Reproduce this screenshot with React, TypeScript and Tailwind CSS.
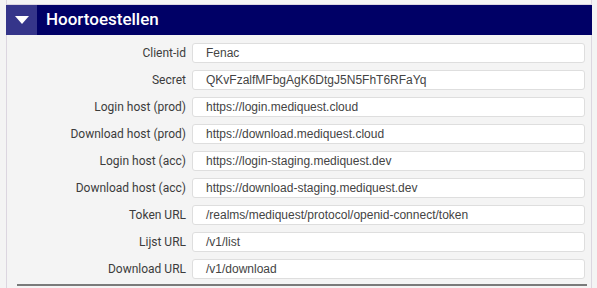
const rows: [string, string][] = [
  ["Client-id", "Fenac"],
  ["Secret", "QKvFzalfMFbgAgK6DtgJ5N5FhT6RFaYq"],
  ["Login host (prod)", "https://login.mediquest.cloud"],
  ["Download host (prod)", "https://download.mediquest.cloud"],
  ["Login host (acc)", "https://login-staging.mediquest.dev"],
  ["Download host (acc)", "https://download-staging.mediquest.dev"],
  ["Token URL", "/realms/mediquest/protocol/openid-connect/token"],
  ["Lijst URL", "/v1/list"],
  ["Download URL", "/v1/download"],
];

export default function App() {
  return (
    <div className="w-[597px] h-[288px] overflow-hidden bg-[#f4f4f4] font-['Roboto',sans-serif]">
      <div className="ml-[6px] w-[586px] h-[5px] border-x border-b border-[#dcd6e0]" />
      <div className="ml-[6px] w-[586px] h-[283px] border-x border-[#dcd6e0]">
        <div className="flex h-[30px] -mx-px">
          <div className="w-[31px] bg-[#35358a] flex items-center justify-center">
            <svg width="14" height="8" viewBox="0 0 14 8">
              <path d="M0 0 L14 0 L7 8 Z" fill="#ffffff" />
            </svg>
          </div>
          <div className="flex-1 bg-[#000066] flex items-center pl-[9px] text-white text-[17px] font-medium">
            Hoortoestellen
          </div>
        </div>
        <div className="pt-[8px] pr-[6px] flex flex-col gap-[7px]">
          {rows.map(([label, value]) => (
            <div key={label} className="flex items-center h-[20px]">
              <div className="w-[179px] text-right text-[12px] text-[#3c3c3c]">
                {label}
              </div>
              <div className="ml-[6px] flex-1 h-[20px] bg-white border border-[#dedede] rounded-[3px] flex items-center pl-[13px] text-[12px] text-[#444] font-['Liberation_Sans',Arial,sans-serif]">
                {value}
              </div>
            </div>
          ))}
        </div>
        <div className="ml-[10px] mr-[4px] mt-[5px] h-[2px] bg-[#7a7a7a]" />
      </div>
    </div>
  );
}
